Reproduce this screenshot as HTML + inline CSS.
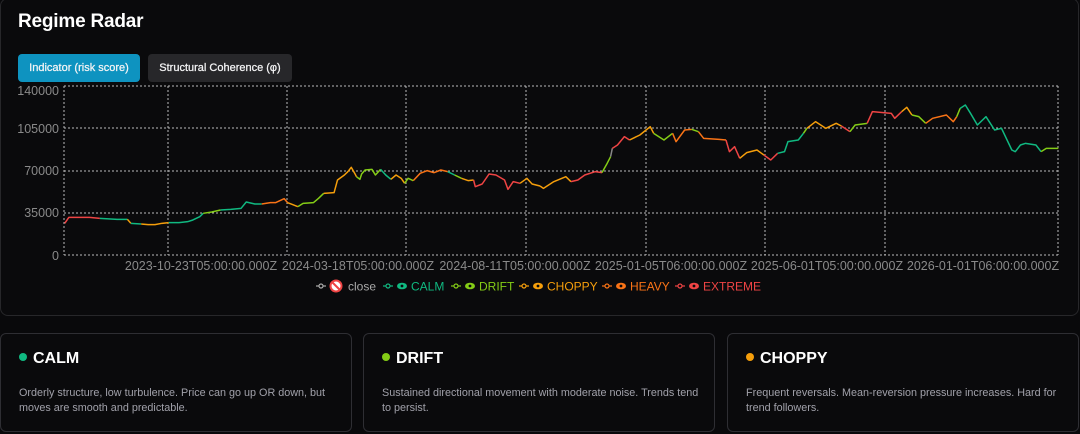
<!DOCTYPE html>
<html><head><meta charset="utf-8"><style>
*{margin:0;padding:0;box-sizing:border-box}
body{width:1080px;height:434px;background:#09090b;font-family:"Liberation Sans",sans-serif;color:#fff;position:relative;overflow:hidden}
.panel{position:absolute;left:0;top:-2px;width:1079px;height:318px;border:1px solid #27272a;border-radius:8px;background:#0a0a0c}
h1{position:absolute;left:18px;top:11px;font-size:19px;font-weight:bold;letter-spacing:-0.2px}
.btn{position:absolute;top:54px;height:28px;border-radius:4px;font-size:11px;line-height:28px;text-align:center;color:#f4f4f5;-webkit-text-stroke:0.25px #f4f4f5}
.b1{left:18px;width:122px;background:#0e93c0}
.b2{left:148px;width:144px;background:#27272a}
svg{position:absolute;left:0;top:0}
.ylab,.xlab{fill:#8a8a8a;font-size:12.5px;font-family:"Liberation Sans",sans-serif}
.lg{font-size:12px;font-family:"Liberation Sans",sans-serif}
.card{position:absolute;top:333px;width:352px;height:99px;border:1px solid #2e2e33;border-radius:6px;background:#0a0a0c}
.card h2{position:absolute;left:18px;top:16px;font-size:16px;font-weight:bold}
.card h2 i{display:inline-block;width:8px;height:8px;border-radius:50%;margin-right:6px;vertical-align:2px}
.card p{position:absolute;left:18px;top:52px;right:14px;font-size:10.8px;line-height:15px;color:#a1a1aa}
</style></head><body>
<div class="panel"></div>
<h1>Regime Radar</h1>
<div class="btn b1">Indicator (risk score)</div>
<div class="btn b2">Structural Coherence (φ)</div>
<svg width="1080" height="434">
<g stroke="#bbb" stroke-width="1" stroke-dasharray="2,2" fill="none">
<line x1="64" y1="86" x2="1058" y2="86"/><line x1="64" y1="128" x2="1058" y2="128"/><line x1="64" y1="171" x2="1058" y2="171"/><line x1="64" y1="213" x2="1058" y2="213"/><line x1="64" y1="255" x2="1058" y2="255"/>
<line x1="64" y1="86" x2="64" y2="255"/><line x1="168" y1="86" x2="168" y2="255"/><line x1="287" y1="86" x2="287" y2="255"/><line x1="406" y1="86" x2="406" y2="255"/><line x1="526" y1="86" x2="526" y2="255"/><line x1="646" y1="86" x2="646" y2="255"/><line x1="765" y1="86" x2="765" y2="255"/><line x1="885" y1="86" x2="885" y2="255"/><line x1="1058" y1="86" x2="1058" y2="255"/>
</g>
<g class="ylab" text-anchor="end"><text x="59" y="95">140000</text><text x="59" y="133">105000</text><text x="59" y="175">70000</text><text x="59" y="217">35000</text><text x="59" y="260">0</text></g>
<g class="xlab" text-anchor="middle"><text x="201" y="270">2023-10-23T05:00:00.000Z</text><text x="358" y="270">2024-03-18T05:00:00.000Z</text><text x="515" y="270">2024-08-11T05:00:00.000Z</text><text x="671" y="270">2025-01-05T06:00:00.000Z</text><text x="827" y="270">2025-06-01T05:00:00.000Z</text><text x="983" y="270">2026-01-01T06:00:00.000Z</text></g>
<g fill="none" stroke-width="1.5" stroke-linejoin="round">
<g transform="translate(0,80) scale(0.3444,0.3333)">
<polyline vector-effect="non-scaling-stroke" stroke="#ef4444" points="188,430 200,412 260,412 290,415"/>
<polyline vector-effect="non-scaling-stroke" stroke="#10b981" points="290,415 340,418 370,418"/>
<polyline vector-effect="non-scaling-stroke" stroke="#f59e0b" points="370,418 380,430"/>
<polyline vector-effect="non-scaling-stroke" stroke="#10b981" points="380,430 410,432"/>
<polyline vector-effect="non-scaling-stroke" stroke="#f59e0b" points="410,432 430,434 450,434 470,430 490,428"/>
<polyline vector-effect="non-scaling-stroke" stroke="#10b981" points="490,428 520,428 545,425 560,420 580,410 590,400"/>
<polyline vector-effect="non-scaling-stroke" stroke="#84cc16" points="590,400 615,396 640,390"/>
<polyline vector-effect="non-scaling-stroke" stroke="#10b981" points="640,390 670,388 700,385 715,366 740,372 760,372"/>
<polyline vector-effect="non-scaling-stroke" stroke="#f97316" points="760,372 785,368 800,368 825,356 835,368"/>
<polyline vector-effect="non-scaling-stroke" stroke="#f59e0b" points="835,368 845,372 865,380"/>
<polyline vector-effect="non-scaling-stroke" stroke="#84cc16" points="865,380 880,370 910,368 925,355 940,340"/>
<polyline vector-effect="non-scaling-stroke" stroke="#f59e0b" points="940,340 970,338 980,300 1000,285 1010,275 1020,262 1030,280 1035,290"/>
<polyline vector-effect="non-scaling-stroke" stroke="#84cc16" points="1035,290 1045,298 1050,282 1060,270 1080,268 1090,285 1105,268"/>
<polyline vector-effect="non-scaling-stroke" stroke="#10b981" points="1105,268 1120,285 1135,298"/>
<polyline vector-effect="non-scaling-stroke" stroke="#f59e0b" points="1135,298 1150,285 1165,295 1175,310"/>
<polyline vector-effect="non-scaling-stroke" stroke="#84cc16" points="1175,310 1185,295 1200,302"/>
<polyline vector-effect="non-scaling-stroke" stroke="#f97316" points="1200,302 1220,280 1240,272 1260,278 1280,270 1300,275"/>
<polyline vector-effect="non-scaling-stroke" stroke="#10b981" points="1300,275 1320,285"/>
<polyline vector-effect="non-scaling-stroke" stroke="#84cc16" points="1320,285 1340,295"/>
<polyline vector-effect="non-scaling-stroke" stroke="#f59e0b" points="1340,295 1360,302 1375,300"/>
<polyline vector-effect="non-scaling-stroke" stroke="#ef4444" points="1375,300 1380,320 1400,312 1420,282 1440,285 1465,300 1475,328 1490,305 1510,310"/>
<polyline vector-effect="non-scaling-stroke" stroke="#f59e0b" points="1510,310 1530,295 1545,312 1568,318"/>
</g>
<g transform="translate(540,80) scale(0.3444,0.3333)">
<polyline vector-effect="non-scaling-stroke" stroke="#f59e0b" points="0,318 10,325 40,305 75,290 90,305"/>
<polyline vector-effect="non-scaling-stroke" stroke="#ef4444" points="90,305 110,300 130,285 160,275 180,278"/>
<polyline vector-effect="non-scaling-stroke" stroke="#84cc16" points="180,278 195,250 205,230"/>
<polyline vector-effect="non-scaling-stroke" stroke="#888" points="205,230 210,205"/>
<polyline vector-effect="non-scaling-stroke" stroke="#ef4444" points="210,205 225,195 245,170 260,180"/>
<polyline vector-effect="non-scaling-stroke" stroke="#f59e0b" points="260,180 290,165 320,140 330,160"/>
<polyline vector-effect="non-scaling-stroke" stroke="#84cc16" points="330,160 360,180 385,160"/>
<polyline vector-effect="non-scaling-stroke" stroke="#f97316" points="385,160 395,185 420,150 440,148"/>
<polyline vector-effect="non-scaling-stroke" stroke="#84cc16" points="440,148 460,155"/>
<polyline vector-effect="non-scaling-stroke" stroke="#f97316" points="460,155 475,175 520,178 540,180"/>
<polyline vector-effect="non-scaling-stroke" stroke="#ef4444" points="540,180 550,215 565,200 580,235"/>
<polyline vector-effect="non-scaling-stroke" stroke="#f59e0b" points="580,235 600,218 630,210 650,225"/>
<polyline vector-effect="non-scaling-stroke" stroke="#ef4444" points="650,225 670,240 690,220"/>
<polyline vector-effect="non-scaling-stroke" stroke="#10b981" points="690,220 710,215 720,185 750,180 765,160"/>
<polyline vector-effect="non-scaling-stroke" stroke="#84cc16" points="765,160 775,145"/>
<polyline vector-effect="non-scaling-stroke" stroke="#f59e0b" points="775,145 800,125 830,145 860,130 875,138"/>
<polyline vector-effect="non-scaling-stroke" stroke="#ef4444" points="875,138 900,155"/>
<polyline vector-effect="non-scaling-stroke" stroke="#84cc16" points="900,155 915,135 950,130"/>
<polyline vector-effect="non-scaling-stroke" stroke="#ef4444" points="950,130 965,95 1020,100 1030,115 1050,95"/>
<polyline vector-effect="non-scaling-stroke" stroke="#f59e0b" points="1050,95 1065,82 1080,105"/>
<polyline vector-effect="non-scaling-stroke" stroke="#84cc16" points="1080,105 1100,110 1120,130"/>
<polyline vector-effect="non-scaling-stroke" stroke="#f97316" points="1120,130 1140,115 1180,105 1200,125 1210,110"/>
<polyline vector-effect="non-scaling-stroke" stroke="#84cc16" points="1210,110 1220,85"/>
<polyline vector-effect="non-scaling-stroke" stroke="#10b981" points="1220,85 1235,75 1250,100 1270,135 1295,110 1320,150 1340,145 1370,210 1380,215 1395,195 1410,190 1440,195 1455,215"/>
<polyline vector-effect="non-scaling-stroke" stroke="#84cc16" points="1455,215 1470,205 1505,205"/>
</g>
</g>
<g class="lg">
<g stroke="#aaa" fill="none" stroke-width="1.2"><line x1="316" y1="286" x2="326" y2="286"/><circle cx="321" cy="286" r="2" fill="#0a0a0c"/></g>
<circle cx="336" cy="286" r="5.5" fill="#fff" stroke="#ef4444" stroke-width="2"/><line x1="332" y1="282" x2="340" y2="290" stroke="#ef4444" stroke-width="2"/>
<text x="348" y="290.5" fill="#aaa">close</text>
<g stroke="#10b981" fill="none" stroke-width="1.2"><line x1="383" y1="286" x2="393" y2="286"/><circle cx="388" cy="286" r="2" fill="#0a0a0c"/></g>
<ellipse cx="402" cy="286" rx="5" ry="3.3" fill="#10b981"/><circle cx="402" cy="286" r="1.4" fill="#0a0a0c"/>
<text x="411" y="290.5" fill="#10b981">CALM</text>
<g stroke="#84cc16" fill="none" stroke-width="1.2"><line x1="451" y1="286" x2="461" y2="286"/><circle cx="456" cy="286" r="2" fill="#0a0a0c"/></g>
<ellipse cx="470" cy="286" rx="5" ry="3.3" fill="#84cc16"/><circle cx="470" cy="286" r="1.4" fill="#0a0a0c"/>
<text x="479" y="290.5" fill="#84cc16">DRIFT</text>
<g stroke="#f59e0b" fill="none" stroke-width="1.2"><line x1="519" y1="286" x2="529" y2="286"/><circle cx="524" cy="286" r="2" fill="#0a0a0c"/></g>
<ellipse cx="538" cy="286" rx="5" ry="3.3" fill="#f59e0b"/><circle cx="538" cy="286" r="1.4" fill="#0a0a0c"/>
<text x="547" y="290.5" fill="#f59e0b">CHOPPY</text>
<g stroke="#f97316" fill="none" stroke-width="1.2"><line x1="602" y1="286" x2="612" y2="286"/><circle cx="607" cy="286" r="2" fill="#0a0a0c"/></g>
<ellipse cx="621" cy="286" rx="5" ry="3.3" fill="#f97316"/><circle cx="621" cy="286" r="1.4" fill="#0a0a0c"/>
<text x="630" y="290.5" fill="#f97316">HEAVY</text>
<g stroke="#ef4444" fill="none" stroke-width="1.2"><line x1="675" y1="286" x2="685" y2="286"/><circle cx="680" cy="286" r="2" fill="#0a0a0c"/></g>
<ellipse cx="694" cy="286" rx="5" ry="3.3" fill="#ef4444"/><circle cx="694" cy="286" r="1.4" fill="#0a0a0c"/>
<text x="703" y="290.5" fill="#ef4444">EXTREME</text>
</g>
</svg>
<div class="card" style="left:0"><h2><i style="background:#10b981"></i>CALM</h2><p>Orderly structure, low turbulence. Price can go up OR down, but moves are smooth and predictable.</p></div>
<div class="card" style="left:363px"><h2><i style="background:#84cc16"></i>DRIFT</h2><p>Sustained directional movement with moderate noise. Trends tend to persist.</p></div>
<div class="card" style="left:727px"><h2><i style="background:#f59e0b"></i>CHOPPY</h2><p>Frequent reversals. Mean-reversion pressure increases. Hard for trend followers.</p></div>
</body></html>
